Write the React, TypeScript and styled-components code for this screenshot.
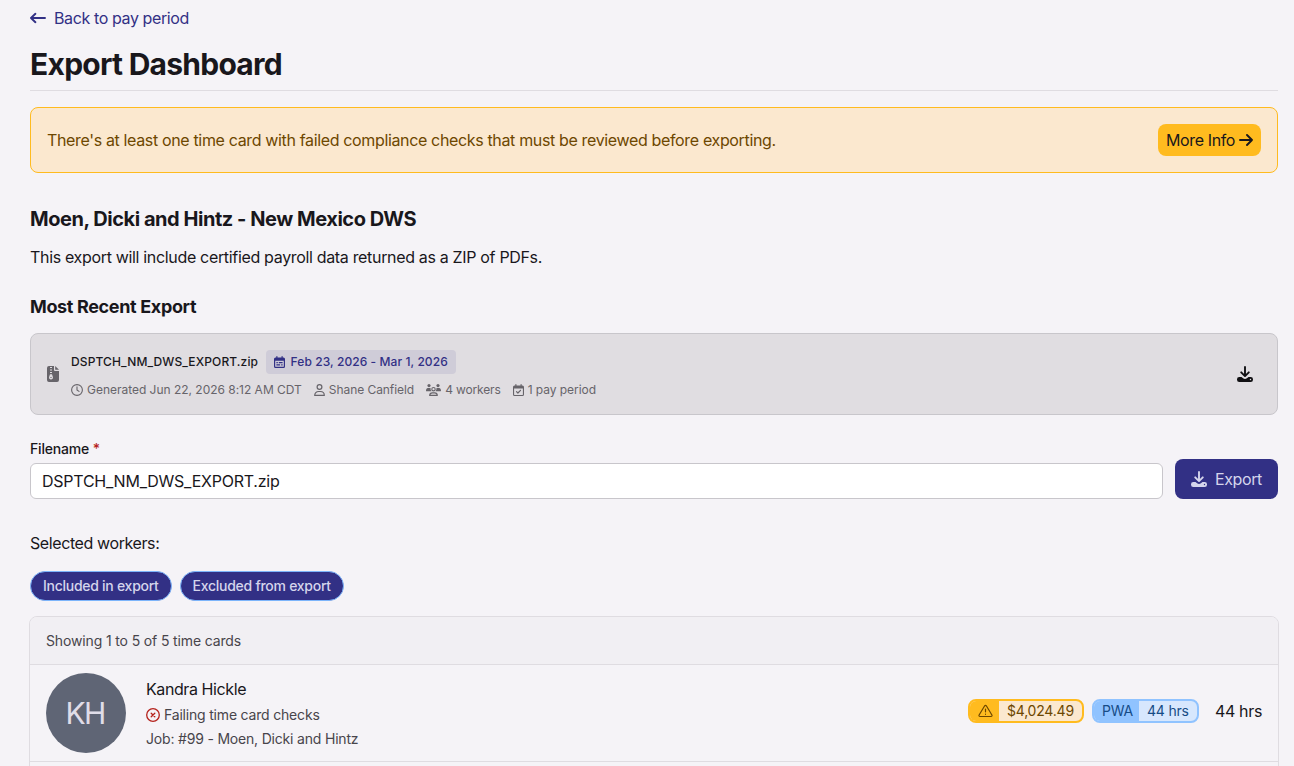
import React from 'react';
import styled, { createGlobalStyle } from 'styled-components';

const GlobalStyle = createGlobalStyle`
  *, *::before, *::after { box-sizing: border-box; }
  body {
    margin: 0;
    background: #f5f3f7;
    color: #19171c;
    font: 400 16px/24px Inter, "Liberation Sans", sans-serif;
    letter-spacing: -0.35px;
    overflow: hidden;
  }
  h1, h2, h3, p { margin: 0; }
  svg { display: block; flex: none; }
`;

const Page = styled.main`
  display: flex;
  flex-direction: column;
  height: 766px;
  padding: 6px 16px 0 30px;
  overflow: hidden;
`;

const BackLink = styled.a`
  display: flex;
  align-items: center;
  gap: 8px;
  color: #323085;
  letter-spacing: -0.385px;
  cursor: pointer;
`;

const Title = styled.h1`
  margin-top: 16px;
  padding-bottom: 8px;
  border-bottom: 1px solid #dfdce1;
  font-size: 30px;
  line-height: 36px;
  font-weight: 700;
  letter-spacing: -0.74px;
`;

const Alert = styled.div`
  display: flex;
  flex: none;
  align-items: center;
  justify-content: space-between;
  height: 66px;
  margin-top: 16px;
  padding: 0 16px;
  border: 1px solid #ffbb1f;
  border-radius: 8px;
  background: #fbe8cf;
  color: #6d4700;
`;

const InfoButton = styled.button`
  display: flex;
  align-items: center;
  gap: 4px;
  width: 103px;
  height: 32px;
  padding: 0 8px;
  border: 0;
  border-radius: 8px;
  background: #ffbb1f;
  color: #19171c;
  font: inherit;
  letter-spacing: -0.38px;
  white-space: nowrap;
`;

const Heading = styled.h2`
  margin-top: 32px;
  font-size: 20px;
  line-height: 28px;
  font-weight: 650;
  letter-spacing: -0.46px;
`;

const Description = styled.p`
  margin-top: 12px;
  letter-spacing: -0.33px;
`;

const Subheading = styled.h3`
  margin-top: 24px;
  font-size: 18px;
  line-height: 28px;
  font-weight: 650;
  letter-spacing: -0.35px;
`;

const ExportCard = styled.section`
  display: flex;
  flex: none;
  align-items: center;
  gap: 12px;
  height: 82px;
  margin-top: 12px;
  padding: 16px 24px 16px 16px;
  border: 1px solid #c8c6cb;
  border-radius: 8px;
  background: #e0dde1;
  color: #67646a;
  font-size: 12px;
  line-height: 16px;
`;

const CardBody = styled.div`
  display: flex;
  flex: 1;
  flex-direction: column;
  gap: 8px;
`;

const FileRow = styled.div`
  display: flex;
  align-items: center;
  gap: 8px;
`;

const FileName = styled.span`
  color: #19171c;
  font-weight: 500;
  letter-spacing: 0.12px;
`;

const DateBadge = styled.span`
  display: flex;
  align-items: center;
  gap: 5.5px;
  width: 190px;
  height: 24px;
  padding: 0 8px;
  border-radius: 4px;
  background: #cfccd8;
  color: #323085;
  font-weight: 500;
  letter-spacing: 0.08px;
  white-space: nowrap;
`;

const MetaRow = styled.div`
  display: flex;
  gap: 12px;
`;

const Meta = styled.span<{ $spacing?: number }>`
  display: flex;
  align-items: center;
  gap: 4px;
  letter-spacing: ${({ $spacing }) => $spacing ?? -0.02}px;
`;

const DownloadButton = styled.button`
  padding: 0;
  border: 0;
  background: none;
  color: #111013;
`;

const Form = styled.form`
  display: flex;
  align-items: flex-end;
  gap: 12px;
  margin-top: 24px;
`;

const Field = styled.label`
  display: flex;
  flex: 1;
  flex-direction: column;
  gap: 4px;
  font-size: 14px;
  line-height: 20px;
  font-weight: 500;
  letter-spacing: -0.18px;
`;

const Required = styled.span`
  color: #b5221c;
`;

const Input = styled.input`
  width: 100%;
  height: 36px;
  padding: 0 11px;
  border: 1px solid #c8c6cb;
  border-radius: 6px;
  outline: 0;
  background: #fff;
  color: #19171c;
  font: 400 16px/24px Inter, "Liberation Sans", sans-serif;
  letter-spacing: -0.24px;
`;

const ExportButton = styled.button`
  display: flex;
  align-items: center;
  gap: 8px;
  width: 103px;
  height: 40px;
  padding: 0 16px;
  border: 0;
  border-radius: 8px;
  background: #323085;
  color: #d5d5ec;
  font: inherit;
  letter-spacing: -0.38px;
`;

const Selected = styled.p`
  margin-top: 32px;
  letter-spacing: -0.4px;
`;

const Chips = styled.div`
  display: flex;
  gap: 8px;
  margin-top: 16px;
`;

const Chip = styled.button`
  height: 30px;
  padding: 0 12px;
  border: 1px solid #7db5fb;
  border-radius: 15px;
  background: #323085;
  color: #d5d5ec;
  font: 500 14px/20px Inter, "Liberation Sans", sans-serif;
  letter-spacing: -0.27px;
`;

const CardList = styled.section`
  flex: none;
  height: 240px;
  margin: 15px -1px 0;
  border: 1px solid #dfdce1;
  border-radius: 8px;
`;

const ListHeader = styled.header`
  height: 48px;
  padding: 14px 16px;
  border-bottom: 1px solid #dfdce1;
  border-radius: 7px 7px 0 0;
  background: #f1eff3;
  color: #48454b;
  font-size: 14px;
  line-height: 20px;
  letter-spacing: -0.14px;
`;

const WorkerRow = styled.article`
  display: flex;
  align-items: center;
  height: 97px;
  padding: 8px 16px;
  border-bottom: 1px solid #dfdce1;
`;

const Avatar = styled.div`
  display: grid;
  place-items: center;
  width: 80px;
  height: 80px;
  margin-right: 20px;
  border-radius: 50%;
  background: #5f6575;
  color: #e0dde8;
  font-size: 30px;
  letter-spacing: -1.8px;
  padding-right: 2px;
`;

const WorkerInfo = styled.div`
  display: flex;
  flex: 1;
  flex-direction: column;
  gap: 4px;
`;

const WorkerName = styled.span`
  letter-spacing: -0.41px;
`;

const WorkerDetail = styled.span`
  display: flex;
  align-items: center;
  gap: 4px;
  color: #48454b;
  font-size: 14px;
  line-height: 20px;
  letter-spacing: -0.19px;
`;

const ErrorMark = styled.span`
  color: #b5221c;
`;

const Hours = styled.div`
  display: flex;
  align-items: center;
  gap: 8px;
  padding-bottom: 4px;
`;

const tones = {
  amber: { strong: '#ffbb1f', soft: '#fbe8cf', text: '#6d4700' },
  blue: { strong: '#90c3ff', soft: '#d7e7fd', text: '#164c86' },
};

const Pill = styled.span<{ $tone: keyof typeof tones; $width: number }>`
  display: flex;
  width: ${({ $width }) => $width}px;
  height: 24px;
  border: 2px solid ${({ $tone }) => tones[$tone].strong};
  border-radius: 8px;
  background: ${({ $tone }) => tones[$tone].soft};
  color: ${({ $tone }) => tones[$tone].text};
  font-size: 14px;
  line-height: 20px;
  letter-spacing: -0.2px;
  overflow: hidden;
`;

const PillLabel = styled.span<{ $tone: keyof typeof tones }>`
  display: flex;
  align-items: center;
  padding: 0 6px 0 8px;
  background: ${({ $tone }) => tones[$tone].strong};
`;

const PillValue = styled.span`
  padding-left: 8px;
`;

const Total = styled.span`
  margin-left: 8px;
`;

const Stroke = styled.svg`
  fill: none;
  stroke: currentColor;
  stroke-linecap: round;
  stroke-linejoin: round;
`;

const ArrowLeft = () => (
  <Stroke width="16" height="16" viewBox="0 0 16 16" strokeWidth="1.9">
    <path d="M15 8H1.2M5.4 3.8 1 8l4.400 4.200" />
  </Stroke>
);

const ArrowRight = () => (
  <Stroke width="14" height="16" viewBox="0 0 14 16" strokeWidth="1.9">
    <path d="M1 8h12M8 3l5 5-5 5" />
  </Stroke>
);

const FileZip = () => (
  <svg width="12" height="16" viewBox="0 0 12 16" fill="currentColor">
    <path
      fillRule="evenodd"
      d="M2 0h5v4a1 1 0 0 0 1 1H12V14a2 2 0 0 1-2 2H2a2 2 0 0 1-2-2V2a2 2 0 0 1 2-2Zm1 1v1h2V1H3Zm0 2.500v1h2v-1H3Zm0 2.500v1h2v-1H3Zm0 2.200L2.100 11c-.4 1.400.600 2.400 1.900 2.400s2.300-1 1.900-2.400L5 8.200H3Z"
    />
    <path d="M3.500 11h1a.5.500 0 0 1 0 1.100h-1a.5.500 0 0 1 0-1.100Z" opacity=".6" />
    <path d="M8.200 0 12 3.800H8.200Z" />
  </svg>
);

const Download = () => (
  <svg width="16" height="16" viewBox="0 0 16 16">
    <path
      d="M8 1v8.600M4.200 6.300 8 10.100l3.800-3.800"
      fill="none"
      stroke="currentColor"
      strokeWidth="1.900"
      strokeLinecap="round"
      strokeLinejoin="round"
    />
    <path
      fill="currentColor"
      fillRule="evenodd"
      d="M2.300 11h2.200l1.600 1.200c1.100.9 2.700.9 3.800 0l1.600-1.200h2.200A2.300 2.300 0 0 1 16 13.300v.4a2.300 2.300 0 0 1-2.300 2.300H2.300A2.300 2.300 0 0 1 0 13.700v-.4A2.300 2.300 0 0 1 2.300 11Zm11.200 1.800a.7.700 0 1 0 0 1.400.7.700 0 0 0 0-1.400Z"
    />
  </svg>
);

const CalendarDays = () => (
  <svg width="11" height="12" viewBox="0 0 11 12" fill="currentColor">
    <path
      fillRule="evenodd"
      d="M2.300.6a.6.600 0 0 1 1.200 0v.9h4V.6a.6.600 0 0 1 1.200 0v.9h.8A1.500 1.500 0 0 1 11 3v7.500A1.500 1.500 0 0 1 9.500 12h-8A1.500 1.500 0 0 1 0 10.500V3a1.500 1.500 0 0 1 1.500-1.500h.8ZM1.200 4.700v5.700c0 .3.100.4.400.4h7.800c.3 0 .4-.1.400-.4V4.700Z"
    />
    <path d="M2.400 6h1.400v1.200H2.400Zm2.400 0h3.800v1.200H4.800Zm-2.400 2.300h3.700v1.200H2.400Zm4.800 0h1.400v1.200H7.200Z" />
  </svg>
);

const CalendarCheck = () => (
  <svg width="11" height="12" viewBox="0 0 11 12" fill="currentColor">
    <path
      fillRule="evenodd"
      d="M2.300.6a.6.600 0 0 1 1.200 0v.9h4V.6a.6.600 0 0 1 1.200 0v.9h.8A1.500 1.500 0 0 1 11 3v7.500A1.500 1.500 0 0 1 9.500 12h-8A1.500 1.500 0 0 1 0 10.500V3a1.500 1.500 0 0 1 1.500-1.500h.8ZM1.100 4.500v5.900c0 .3.100.5.400.5h8c.3 0 .4-.2.400-.5V4.500Z"
    />
    <path
      d="m3.500 7.600 1.400 1.400 2.600-2.700"
      fill="none"
      stroke="currentColor"
      strokeWidth="1.200"
      strokeLinecap="round"
      strokeLinejoin="round"
    />
  </svg>
);

const Clock = () => (
  <Stroke width="12" height="12" viewBox="0 0 12 12" strokeWidth="1.100">
    <circle cx="6" cy="6" r="5.400" />
    <path d="M6 2.900V6l2 1.400" />
  </Stroke>
);

const User = () => (
  <Stroke width="11" height="12" viewBox="0 0 11 12" strokeWidth="1.200">
    <circle cx="5.500" cy="3" r="2.400" />
    <path d="M.7 11.400c0-2.300 1.600-3.900 3.900-3.900h1.800c2.300 0 3.900 1.600 3.900 3.900Z" />
  </Stroke>
);

const Users = () => (
  <svg width="15" height="12" viewBox="0 0 15 12" fill="currentColor">
    <circle cx="3" cy="1.600" r="1.600" />
    <circle cx="12" cy="1.600" r="1.600" />
    <path d="M1.900 4h1.900c.3 0 .5.100.8.200A3.600 3.600 0 0 0 5.400 7.200H.5a.5.500 0 0 1-.5-.5C0 5.200.8 4 1.900 4ZM13.100 4h-1.900c-.3 0-.5.100-.8.200a3.600 3.600 0 0 1-.8 3h4.900c.3 0 .5-.2.500-.5C15 5.200 14.200 4 13.100 4Z" />
    <circle cx="7.500" cy="5.200" r="1.700" fill="none" stroke="currentColor" strokeWidth="1.100" />
    <path
      d="M3.700 11.400c.1-1.500 1.100-2.500 2.600-2.500h2.400c1.500 0 2.500 1 2.600 2.500Z"
      fill="none"
      stroke="currentColor"
      strokeWidth="1.200"
      strokeLinejoin="round"
    />
  </svg>
);

const CircleX = () => (
  <Stroke width="14" height="14" viewBox="0 0 14 14" strokeWidth="1.300">
    <circle cx="7" cy="7" r="6.300" />
    <path d="m5.200 5.200 3.600 3.600m0-3.600L5.200 8.800" />
  </Stroke>
);

const Warning = () => (
  <Stroke width="15" height="14" viewBox="0 0 15 14" strokeWidth="1.200">
    <path d="M6.700 1.800 1.100 11c-.4.700 0 1.500.9 1.500h11c.9 0 1.300-.8.900-1.500L8.300 1.800c-.4-.6-1.200-.6-1.600 0Z" />
    <path d="M7.500 5v2.800M7.500 10.200v.1" />
  </Stroke>
);

export default function App() {
  return (
    <>
      <GlobalStyle />
      <Page>
        <BackLink>
          <ArrowLeft />
          Back to pay period
        </BackLink>
        <Title>Export Dashboard</Title>
        <Alert>
          <span>
            There's at least one time card with failed compliance checks that must be reviewed before exporting.
          </span>
          <InfoButton>
            More Info
            <ArrowRight />
          </InfoButton>
        </Alert>
        <Heading>Moen, Dicki and Hintz - New Mexico DWS</Heading>
        <Description>This export will include certified payroll data returned as a ZIP of PDFs.</Description>
        <Subheading>Most Recent Export</Subheading>
        <ExportCard>
          <FileZip />
          <CardBody>
            <FileRow>
              <FileName>DSPTCH_NM_DWS_EXPORT.zip</FileName>
              <DateBadge>
                <CalendarDays />
                Feb 23, 2026 - Mar 1, 2026
              </DateBadge>
            </FileRow>
            <MetaRow>
              <Meta><Clock />Generated Jun 22, 2026 8:12 AM CDT</Meta>
              <Meta $spacing={-0.06}><User />Shane Canfield</Meta>
              <Meta $spacing={-0.15}><Users />4 workers</Meta>
              <Meta $spacing={-0.04}><CalendarCheck />1 pay period</Meta>
            </MetaRow>
          </CardBody>
          <DownloadButton aria-label="Download"><Download /></DownloadButton>
        </ExportCard>
        <Form>
          <Field>
            <span>Filename <Required>*</Required></span>
            <Input defaultValue="DSPTCH_NM_DWS_EXPORT.zip" />
          </Field>
          <ExportButton type="button">
            <Download />
            Export
          </ExportButton>
        </Form>
        <Selected>Selected workers:</Selected>
        <Chips>
          <Chip>Included in export</Chip>
          <Chip>Excluded from export</Chip>
        </Chips>
        <CardList>
          <ListHeader>Showing 1 to 5 of 5 time cards</ListHeader>
          <WorkerRow>
            <Avatar>KH</Avatar>
            <WorkerInfo>
              <WorkerName>Kandra Hickle</WorkerName>
              <WorkerDetail>
                <ErrorMark><CircleX /></ErrorMark>
                Failing time card checks
              </WorkerDetail>
              <WorkerDetail>Job: #99 - Moen, Dicki and Hintz</WorkerDetail>
            </WorkerInfo>
            <Hours>
              <Pill $tone="amber" $width={116}>
                <PillLabel $tone="amber"><Warning /></PillLabel>
                <PillValue>$4,024.49</PillValue>
              </Pill>
              <Pill $tone="blue" $width={107}>
                <PillLabel $tone="blue">PWA</PillLabel>
                <PillValue>44 hrs</PillValue>
              </Pill>
              <Total>44 hrs</Total>
            </Hours>
          </WorkerRow>
        </CardList>
      </Page>
    </>
  );
}
